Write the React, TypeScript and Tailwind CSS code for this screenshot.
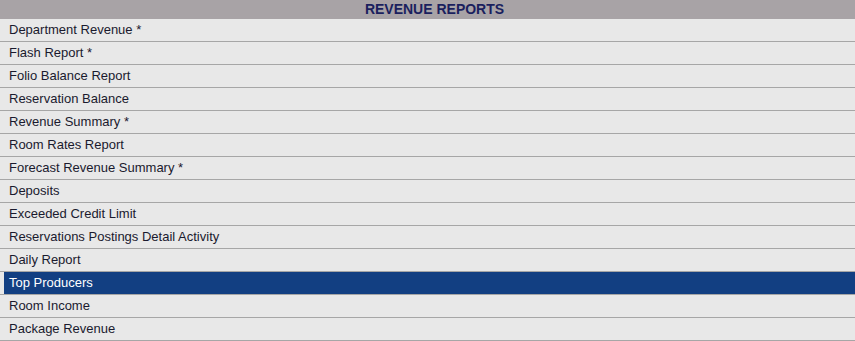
const reports = [
  'Department Revenue *',
  'Flash Report *',
  'Folio Balance Report',
  'Reservation Balance',
  'Revenue Summary *',
  'Room Rates Report',
  'Forecast Revenue Summary *',
  'Deposits',
  'Exceeded Credit Limit',
  'Reservations Postings Detail Activity',
  'Daily Report',
  'Top Producers',
  'Room Income',
  'Package Revenue',
];

export default function App() {
  const selected = 'Top Producers';

  return (
    <div className="w-[855px] bg-[#e8e8e8] text-[13px]" style={{ fontFamily: '"Liberation Sans", Arial, sans-serif' }}>
      {/* Header */}
      <div className="h-[19px] bg-[#a8a3a6] flex items-center justify-center font-bold text-[14px] text-[#1a1f5e] pl-[14px]">
        REVENUE REPORTS
      </div>

      {/* Rows */}
      {reports.map((name) => {
        const isSelected = name === selected;
        return (
          <div key={name} className="h-[23px] border-b border-[#a6a6a6] pl-1 flex">
            <div
              className={
                isSelected
                  ? 'flex-1 flex items-center pl-[5px] bg-[#123f82] text-white'
                  : 'flex-1 flex items-center pl-[5px] text-[#1a1a2e]'
              }
            >
              {name}
            </div>
          </div>
        );
      })}
    </div>
  );
}
